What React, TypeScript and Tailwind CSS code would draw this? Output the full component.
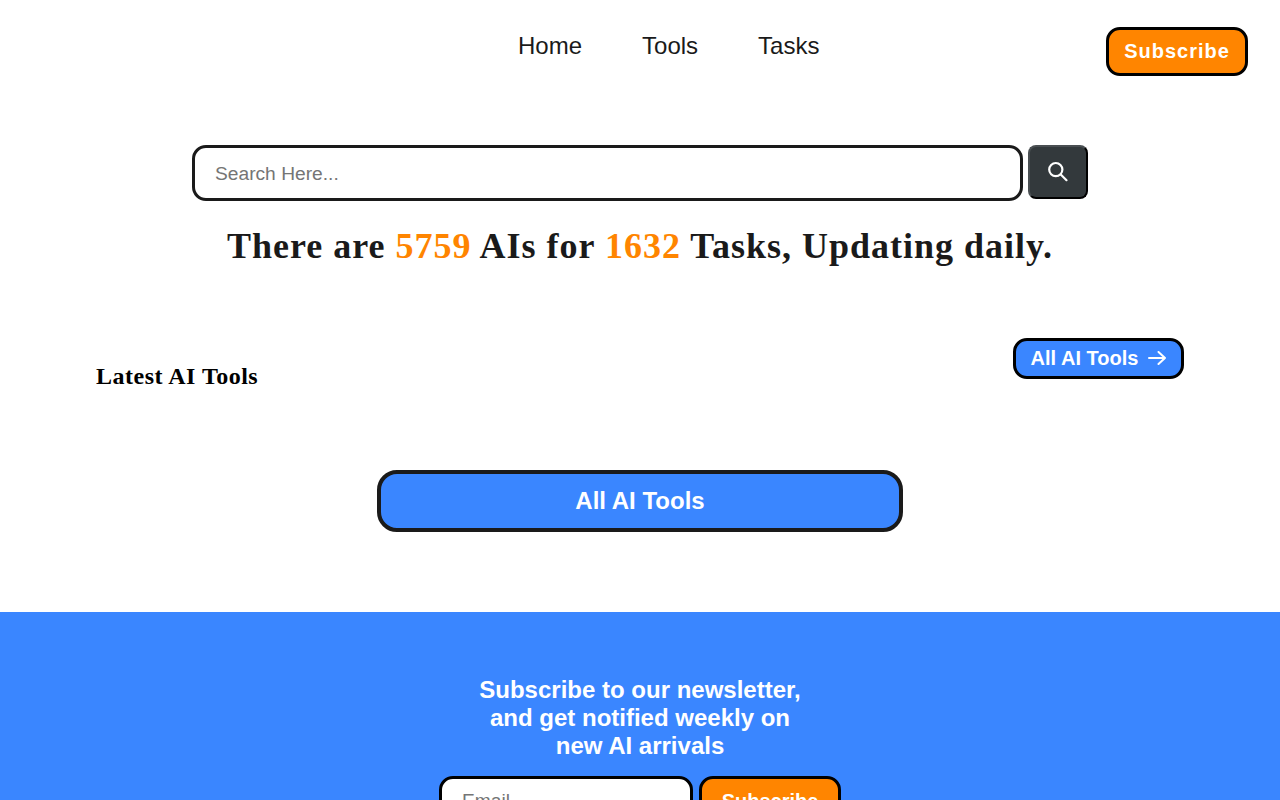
const sans = "font-['Liberation_Sans',Arial,sans-serif]";
const serif = "font-['Liberation_Serif','Times_New_Roman',serif]";

function SearchIcon() {
  return (
    <svg width="22" height="22" viewBox="0 0 22 22" fill="none" stroke="#fff" strokeWidth="2.2" strokeLinecap="round">
      <circle cx="8.8" cy="8.6" r="6.6" />
      <path d="M14 13.8 L19.5 19.2" />
    </svg>
  );
}

function Arrow() {
  return (
    <svg width="18" height="14" viewBox="0 0 18 14" fill="none" stroke="#fff" strokeWidth="2" strokeLinecap="round" strokeLinejoin="round">
      <path d="M1 7 H17 M10.5 1 L17 7 L10.5 13" />
    </svg>
  );
}

export default function App() {
  return (
    <div className={`${sans} bg-white min-h-screen`}>
      <header className="flex items-start h-[145px] pl-[518px] pr-[32px]">
        <nav className="flex gap-[60px] pt-[32px] text-[24px] leading-[28px] text-[#1a1a1a]">
          <a>Home</a>
          <a>Tools</a>
          <a>Tasks</a>
        </nav>
        <button className="ml-auto mt-[27px] w-[142px] h-[49px] rounded-[14px] border-[3px] border-black bg-[#ff8500] text-white font-bold text-[20px] leading-[20px] tracking-[1px] pb-[2px]">
          Subscribe
        </button>
      </header>

      <section className="flex justify-center gap-[5px] items-start">
        <input
          placeholder="Search Here..."
          className="w-[831px] h-[56px] rounded-[14px] border-[3px] border-[#1a1a1a] pl-[20px] pr-[20px] pt-[1px] text-[19.2px] placeholder:text-[#757575] outline-none bg-white"
        />
        <button className="w-[60px] h-[54px] rounded-[8px] bg-[#33393c] border-2 border-[#4a4f52] border-r-black border-b-black flex items-center justify-center">
          <SearchIcon />
        </button>
      </section>

      <h1 className={`${serif} mt-[23px] text-center font-bold text-[36px] leading-[44px] tracking-[1px] text-[#1a1a1a]`}>
        There are <span className="text-[#ff8500]">5759</span> AIs for <span className="text-[#ff8500]">1632</span> Tasks, Updating daily.
      </h1>

      <section className="flex justify-between items-start px-[96px] mt-[70px]">
        <h2 className={`${serif} mt-[24px] font-bold text-[24px] leading-[28px] tracking-[0.5px] text-black`}>Latest AI Tools</h2>
        <button className="w-[171px] h-[41px] rounded-[14px] border-[3px] border-black bg-[#3a86ff] text-white font-bold text-[20px] leading-[20px] flex items-center justify-center gap-[10px] pb-[1px]">
          All AI Tools
          <Arrow />
        </button>
      </section>

      <div className="flex justify-center mt-[80px]">
        <button className="w-[526px] h-[62px] rounded-[20px] border-[4px] border-[#1a1a1a] bg-[#3a86ff] text-white font-bold text-[24px]">
          All AI Tools
        </button>
      </div>

      <footer className="mt-[80px] bg-[#3a86ff] pt-[64px] pb-[40px] flex flex-col items-center">
        <h3 className="text-white font-bold text-[24px] leading-[28px] text-center">
          Subscribe to our newsletter,
          <br />
          and get notified weekly on
          <br />
          new AI arrivals
        </h3>
        <div className="flex gap-[6px] mt-[16px]">
          <input
            placeholder="Email"
            className="w-[254px] h-[52px] rounded-[14px] border-[3px] border-black bg-white px-[20px] pb-[2px] text-[19.2px] placeholder:text-[#757575] outline-none"
          />
          <button className="w-[142px] h-[52px] rounded-[14px] border-[3px] border-black bg-[#ff8500] text-white font-bold text-[20px] pb-[2px]">
            Subscribe
          </button>
        </div>
      </footer>
    </div>
  );
}
